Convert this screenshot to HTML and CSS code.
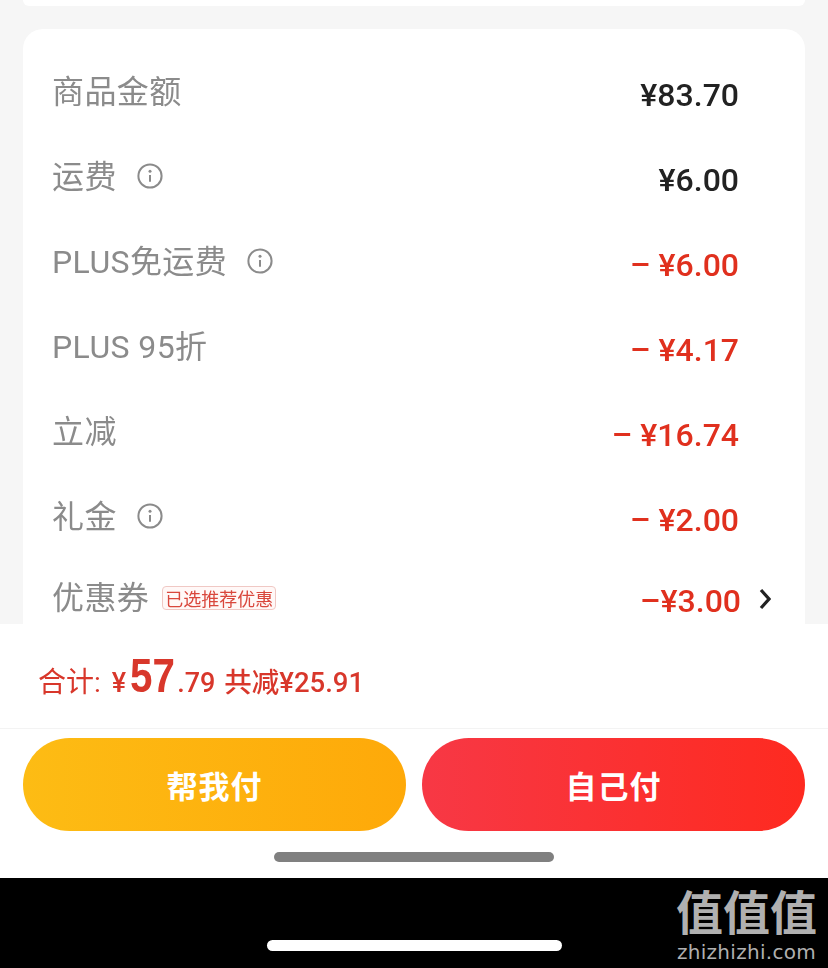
FILE: index.html
```html
<!DOCTYPE html>
<html lang="zh">
<head>
<meta charset="utf-8">
<title>订单结算</title>
<link rel="stylesheet" href="styles.css">
</head>
<body>
<div class="screen">
  <main class="content">
    <div class="prev-card"></div>
    <section class="card">
      <div class="row"><span class="label">商品金额</span><span class="value">¥83.70</span></div>
      <div class="row"><span class="label">运费<svg class="info" viewBox="0 0 26 26"><circle cx="13" cy="13" r="11.6"/><circle class="dot" cx="13" cy="8.2" r="1.5"/><path d="M13 12v6.8"/></svg></span><span class="value">¥6.00</span></div>
      <div class="row"><span class="label">PLUS免运费<svg class="info" viewBox="0 0 26 26"><circle cx="13" cy="13" r="11.6"/><circle class="dot" cx="13" cy="8.2" r="1.5"/><path d="M13 12v6.8"/></svg></span><span class="value red">– ¥6.00</span></div>
      <div class="row"><span class="label">PLUS 95折</span><span class="value red">– ¥4.17</span></div>
      <div class="row"><span class="label">立减</span><span class="value red">– ¥16.74</span></div>
      <div class="row"><span class="label">礼金<svg class="info" viewBox="0 0 26 26"><circle cx="13" cy="13" r="11.6"/><circle class="dot" cx="13" cy="8.2" r="1.5"/><path d="M13 12v6.8"/></svg></span><span class="value red">– ¥2.00</span></div>
      <div class="row row-last"><span class="label">优惠券<span class="tag">已选推荐优惠</span></span><span class="value red">–¥3.00<svg class="chevron" viewBox="0 0 12 22"><path d="M2 2l8 9-8 9"/></svg></span></div>
    </section>
  </main>
  <footer class="footer">
    <div class="total">
      <span class="total-label">合计:</span>
      <span class="yen">¥</span><span class="big">57</span><span class="cents">.79</span>
      <span class="saved">共减¥25.91</span>
    </div>
    <div class="actions">
      <button class="btn btn-yellow">帮我付</button>
      <button class="btn btn-red">自己付</button>
    </div>
    <div class="handle-wrap"><div class="handle"></div></div>
  </footer>
  <div class="navbar">
    <div class="nav-pill"></div>
    <div class="mark">
      <div class="mark-cn">值值值</div>
      <div class="mark-en">zhizhizhi.com</div>
    </div>
  </div>
</div>
</body>
</html>
```

FILE: styles.css
```css
* { box-sizing: border-box; }
html, body { margin: 0; padding: 0; background: #000; }
.screen {
  width: 828px;
  height: 968px;
  display: flex;
  flex-direction: column;
  overflow: hidden;
  font-family: "Noto Sans CJK SC", Roboto, sans-serif;
  background: #000;
  border-radius: 0 0 10px 10px;
}
.content {
  height: 624px;
  flex: none;
  background: #f6f6f6;
  overflow: hidden;
}
.prev-card {
  height: 6px;
  margin: 0 23px;
  background: #fff;
  border-radius: 0 0 18px 18px;
}
.card {
  margin: 23px 23px 0;
  padding: 22px 0 0 29px;
  background: #fff;
  border-radius: 20px 20px 0 0;
}
.row {
  height: 85px;
  display: flex;
  align-items: center;
  justify-content: space-between;
  padding-right: 66px;
}
.row-last { height: 78px; padding-right: 34px; }
.label {
  display: flex;
  align-items: center;
  font-size: 32px;
  line-height: 40px;
  letter-spacing: 0.4px;
  color: #8b8b8b;
  font-family: Roboto, "Noto Sans CJK SC", sans-serif;
  transform: translateY(-2px);
  filter: blur(0.35px);
}
.info {
  width: 26px;
  height: 26px;
  margin-left: 20px;
  fill: none;
  stroke: #8b8b8b;
  stroke-width: 2;
  transform: translateY(-1px);
}
.info .dot { fill: #8b8b8b; stroke: none; }
.value {
  display: flex;
  align-items: center;
  font-family: Roboto, sans-serif;
  font-weight: 500;
  font-size: 32px;
  line-height: 40px;
  color: #222;
  white-space: pre;
  transform: translateY(1px);
  filter: blur(0.35px);
}
.red { color: #e0301e; }
.chevron {
  width: 12px;
  height: 22px;
  margin-left: 18px;
  fill: none;
  stroke: #222;
  stroke-width: 3.2;
  transform: translateY(-2px);
}
.tag {
  margin-left: 13px;
  padding: 0 2px;
  height: 24px;
  display: flex;
  align-items: center;
  font-size: 18px;
  line-height: 22px;
  letter-spacing: 0;
  color: #d9473c;
  border: 1px solid #f0c8c4;
  border-radius: 4px;
  background: #fff8f7;
  font-family: "Noto Sans CJK SC", sans-serif;
}
.footer { flex: none; background: #fff; height: 254px; }
.total {
  height: 105px;
  padding: 22px 0 0 38px;
  display: flex;
  align-items: baseline;
  border-bottom: 1px solid #f3f3f3;
  color: #d8372b;
  font-family: Roboto, "Noto Sans CJK SC", sans-serif;
  font-size: 28px;
  line-height: 60px;
  filter: blur(0.35px);
}
.total-label { margin-right: 11px; }
.yen { font-weight: 500; font-size: 27px; }
.big {
  display: inline-block;
  width: 44px;
  margin: 0 3px 0 4px;
  font-size: 48px;
  font-weight: 700;
  font-family: "Liberation Sans", sans-serif;
  transform: scaleX(0.84);
  transform-origin: left center;
}
.cents { font-size: 27px; font-weight: 500; }
.saved { margin-left: 9px; font-weight: 500; font-size: 27.5px; }
.actions {
  display: flex;
  gap: 16px;
  padding: 9px 23px 0;
}
.btn {
  flex: 1;
  height: 93px;
  border: 0;
  border-radius: 47px;
  color: #fff;
  font-family: "Noto Sans CJK SC", sans-serif;
  font-weight: 700;
  font-size: 31px;
  letter-spacing: 1px;
  padding: 0;
}
.btn-yellow { background: linear-gradient(90deg, #fdbc14, #fea909); }
.btn-red { background: linear-gradient(90deg, #f73845, #fe2a20); }
.handle-wrap {
  padding-top: 21px;
  display: flex;
  justify-content: center;
}
.handle {
  width: 280px;
  height: 10px;
  border-radius: 5px;
  background: #808080;
}
.navbar {
  flex: 1;
  position: relative;
  display: flex;
  justify-content: center;
  align-items: flex-end;
  padding: 0 0 17px 0;
}
.nav-pill {
  width: 295px;
  height: 11px;
  border-radius: 6px;
  background: #fff;
}
.mark {
  position: absolute;
  right: 9px;
  top: 3px;
  width: 145px;
  text-align: center;
  color: #b0b0b0;
}
.mark-cn {
  font-size: 47px;
  line-height: 58px;
  font-weight: 700;
  white-space: nowrap;
}
.mark-en {
  font-family: "DejaVu Sans", sans-serif;
  font-size: 20px;
  line-height: 26px;
  letter-spacing: 0.3px;
  white-space: nowrap;
}
```
